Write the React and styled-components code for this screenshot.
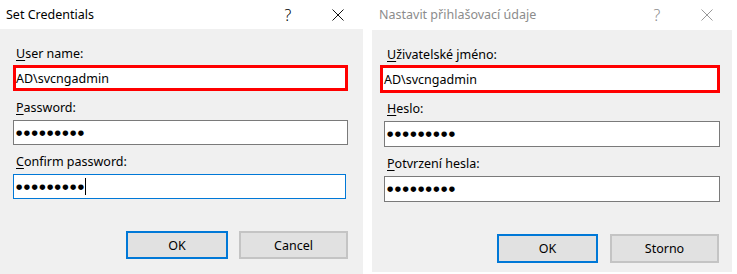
import React from 'react';
import styled, { createGlobalStyle } from 'styled-components';

const GlobalStyle = createGlobalStyle`
  html, body {
    margin: 0;
    padding: 0;
    background: #ffffff;
  }
  body {
    font-family: 'Noto Sans', 'Liberation Sans', sans-serif;
    font-size: 12.5px;
    color: #000;
  }
`;

const Page = styled.div`
  display: flex;
  align-items: flex-start;
  gap: 9px;
  width: 737px;
  height: 274px;
  overflow: hidden;
`;

const Dialog = styled.div`
  display: flex;
  flex-direction: column;
  width: ${({ $width }) => $width}px;
  height: ${({ $height }) => $height}px;
  background: #ffffff;
`;

const TitleBar = styled.div`
  display: flex;
  align-items: center;
  height: ${({ $height }) => $height}px;
  flex-shrink: 0;
  color: ${({ $inactive }) => ($inactive ? '#8c8c8c' : '#000')};
`;

const Title = styled.div`
  flex: 1;
  padding-left: ${({ $indent }) => $indent}px;
  font-size: 12.5px;
  line-height: 16px;
`;

const TitleButton = styled.div`
  display: flex;
  align-items: center;
  justify-content: center;
  width: ${({ $w }) => $w}px;
  height: 100%;
  font-size: 16px;
  font-weight: 300;
`;

const Body = styled.div`
  flex: 1;
  display: flex;
  flex-direction: column;
  background: #f0f0f0;
  padding: 16px ${({ $right }) => $right}px 0 ${({ $left }) => $left}px;
`;

const Field = styled.div`
  display: flex;
  flex-direction: column;
  margin-bottom: ${({ $mb }) => $mb}px;
`;

const Label = styled.div`
  padding-left: 3px;
  line-height: 18px;
  margin-bottom: ${({ $mb }) => $mb || 2}px;
  white-space: nowrap;
`;

const Key = styled.span`
  text-decoration: underline;
  text-underline-offset: 2px;
`;

const Input = styled.div`
  display: flex;
  align-items: center;
  box-sizing: border-box;
  height: ${({ $h }) => $h}px;
  margin-left: ${({ $outset }) => -($outset || 0)}px;
  margin-right: ${({ $shrink }) => $shrink || 0}px;
  padding-left: ${({ $pad }) => $pad ?? 2}px;
  background: #ffffff;
  border: ${({ $state }) =>
    $state === 'error'
      ? '3px solid #ff0000'
      : $state === 'focus'
      ? '1px solid #0078d7'
      : '1px solid #7a7a7a'};
  white-space: nowrap;
`;

const Dots = styled.span`
  font-family: 'DejaVu Sans', sans-serif;
  font-size: 7.2px;
  letter-spacing: 1.45px;
  line-height: 1;
`;

const Caret = styled.span`
  display: inline-block;
  width: 1px;
  height: 17px;
  margin-left: -1px;
  background: #000;
`;

const Actions = styled.div`
  display: flex;
  justify-content: flex-end;
  gap: ${({ $gap }) => $gap}px;
  margin-top: ${({ $mt }) => $mt}px;
  margin-right: ${({ $mr }) => $mr || 0}px;
`;

const Button = styled.div`
  box-sizing: border-box;
  display: flex;
  align-items: center;
  justify-content: center;
  width: ${({ $w }) => $w}px;
  height: ${({ $h }) => $h}px;
  background: #e1e1e1;
  border: ${({ $primary }) => ($primary ? '2px solid #0078d7' : '2px solid #c4c4c4')};
  font-size: 12.5px;
`;

const CloseIcon = ({ color }) => (
  <svg width="12" height="12" viewBox="0 0 12 12">
    <path d="M0.5 0.5 L11.5 11.5 M11.5 0.5 L0.5 11.5" stroke={color} strokeWidth="1" fill="none" />
  </svg>
);

const dots = '●●●●●●●●●';

const App = () => (
  <>
    <GlobalStyle />
    <Page>
      <Dialog $width={363} $height={274}>
        <TitleBar $height={29}>
          <Title $indent={6}>Set Credentials</Title>
          <TitleButton $w={50}>?</TitleButton>
          <TitleButton $w={50}><CloseIcon color="#111" /></TitleButton>
        </TitleBar>
        <Body $left={13} $right={15}>
          <Field $mb={8}>
            <Label><Key>U</Key>ser name:</Label>
            <Input $h={26} $state="error" $pad={0}>AD\svcngadmin</Input>
          </Field>
          <Field $mb={8}>
            <Label $mb={3}><Key>P</Key>assword:</Label>
            <Input $h={25}><Dots>{dots}</Dots></Input>
          </Field>
          <Field>
            <Label $mb={3}><Key>C</Key>onfirm password:</Label>
            <Input $h={25} $state="focus" $shrink={2}><Dots>{dots}</Dots><Caret /></Input>
          </Field>
          <Actions $gap={11} $mt={32}>
            <Button $w={102} $h={28} $primary>OK</Button>
            <Button $w={109} $h={28}>Cancel</Button>
          </Actions>
        </Body>
      </Dialog>
      <Dialog $width={360} $height={272}>
        <TitleBar $height={30} $inactive>
          <Title $indent={7}>Nastavit přihlašovací údaje</Title>
          <TitleButton $w={50}>?</TitleButton>
          <TitleButton $w={50}><CloseIcon color="#999" /></TitleButton>
        </TitleBar>
        <Body $left={12} $right={12}>
          <Field $mb={7}>
            <Label $mb={1}><Key>U</Key>živatelské jméno:</Label>
            <Input $h={28} $state="error" $outset={4} $pad={1}>AD\svcngadmin</Input>
          </Field>
          <Field $mb={8}>
            <Label $mb={3}><Key>H</Key>eslo:</Label>
            <Input $h={26}><Dots>{dots}</Dots></Input>
          </Field>
          <Field>
            <Label $mb={3}><Key>P</Key>otvrzení hesla:</Label>
            <Input $h={26}><Dots>{dots}</Dots></Input>
          </Field>
          <Actions $gap={12} $mt={32} $mr={1}>
            <Button $w={101} $h={29} $primary>OK</Button>
            <Button $w={109} $h={29}>Storno</Button>
          </Actions>
        </Body>
      </Dialog>
    </Page>
  </>
);

export default App;
